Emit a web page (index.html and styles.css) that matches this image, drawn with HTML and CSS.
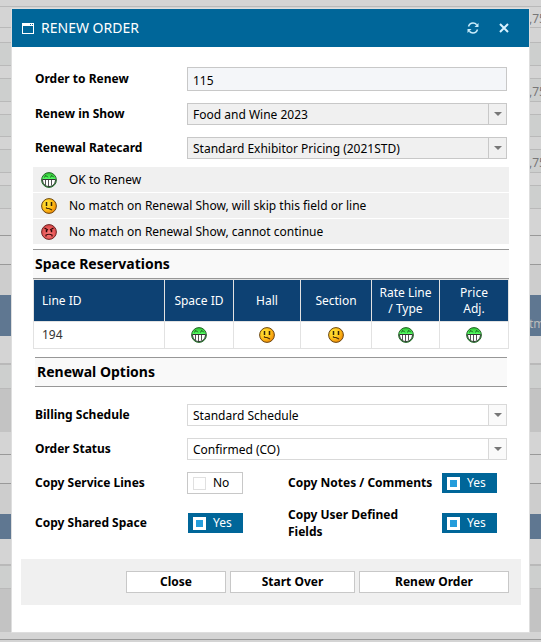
FILE: index.html
```html
<!DOCTYPE html>
<html lang="en">
<head>
<meta charset="utf-8">
<title>Renew Order</title>
<link rel="stylesheet" href="styles.css">
</head>
<body>
<svg class="sprite" aria-hidden="true">
  <defs>
    <linearGradient id="gGreen" x1="0" y1="0" x2="0" y2="1"><stop offset="0" stop-color="#2fc02f"/><stop offset=".4" stop-color="#52fb60"/><stop offset="1" stop-color="#45e058"/></linearGradient>
    <radialGradient id="gYellow" cx=".35" cy=".35" r=".7"><stop offset="0" stop-color="#ffea3c"/><stop offset=".55" stop-color="#ffc21a"/><stop offset="1" stop-color="#f08a08"/></radialGradient>
    <radialGradient id="gRed" cx=".5" cy=".6" r=".6"><stop offset="0" stop-color="#ff7a7a"/><stop offset="1" stop-color="#d84545"/></radialGradient>
    <symbol id="ok" viewBox="0 0 16 16">
      <circle cx="8" cy="8" r="7.4" fill="url(#gGreen)" stroke="#26632a"/>
      <path d="M3.2 5.300 5 3.500 6.800 5.300M9.200 5.300 11 3.500l1.800 1.800" fill="none" stroke="#124c15" stroke-width="1"/>
      <path d="M1.500 7.500h13c0 4-2.700 7-6.500 7s-6.500-3-6.500-7z" fill="#fff" stroke="#333"/>
      <path d="M4.500 8v5M7.500 8v6M10.500 8v5.500" stroke="#555" stroke-width="1"/>
    </symbol>
    <symbol id="skip" viewBox="0 0 16 16">
      <circle cx="8" cy="8" r="7.4" fill="url(#gYellow)" stroke="#6b4712"/>
      <path d="M5.500 4v4M10.500 4v4" stroke="#33220a" stroke-width="1.500"/>
      <path d="M5 9.500l1 1h2l3 1.500" fill="none" stroke="#4a300c" stroke-width="1.200"/>
    </symbol>
    <symbol id="stop" viewBox="0 0 16 16">
      <circle cx="8" cy="8" r="7.4" fill="url(#gRed)" stroke="#6e2525"/>
      <path d="M3.500 4 7 6M12.500 4 9 6" stroke="#2c0707" stroke-width="1.200"/>
      <path d="M5.500 6v2.200M10.500 6v2.200" stroke="#2c0707" stroke-width="1.500"/>
      <path d="M5 12.500v-1.500q3-1.500 6 0v1.500" fill="none" stroke="#3a0b0b" stroke-width="1.200"/>
    </symbol>
  </defs>
</svg>

<div class="backdrop" aria-hidden="true">
  <div class="strip h7"></div>
  <div class="strip h21"><span>,75</span></div>
  <div class="strip h15"></div>
  <div class="strip h23 alt"></div>
  <div class="strip h13"></div>
  <div class="strip h23 alt"><span>,75</span></div>
  <div class="strip h13"></div>
  <div class="strip h22 alt"></div>
  <div class="strip h13"></div>
  <div class="strip h23 alt"><span>,75</span></div>
  <div class="strip h13"></div>
  <div class="strip h23 alt"></div>
  <div class="strip h27 dark"></div>
  <div class="strip h29 dark"></div>
  <div class="strip h30 soft"></div>
  <div class="strip h41 blue"><span>tm</span></div>
  <div class="strip h29 thick"></div>
  <div class="strip h24 alt"></div>
  <div class="strip h43 deep"></div>
  <div class="strip h23 dark"></div>
  <div class="strip h29 dark"></div>
  <div class="strip h30 soft"></div>
  <div class="strip h25 blue"></div>
  <div class="strip h27 thick"></div>
  <div class="strip h23 alt"></div>
  <div class="strip h43 deep"></div>
  <div class="strip h8 dark"></div>
</div>

<div class="overlay">
<main class="dialog" role="dialog" aria-labelledby="title">
  <header class="titlebar">
    <svg class="window-icon" viewBox="0 0 12 11" aria-hidden="true"><path fill="#fff" fill-rule="evenodd" d="M0 0h12v11H0zM1 3v7h10V3zM8 1v1h1V1zM10 1v1h1V1z"/></svg>
    <h1 id="title">RENEW ORDER</h1>
    <button class="tool" type="button" aria-label="Refresh"><svg width="12" height="12" viewBox="0 0 12 12"><path fill="none" stroke="#c9ecfb" stroke-width="1.500" d="M1.500 4.500C2.200 2.300 3.800 1 6 1c1.600 0 2.700.5 3.700 1.700M10.500 7.500C9.800 9.700 8.200 11 6 11c-1.600 0-2.700-.5-3.700-1.700"/><path fill="#c9ecfb" d="M11.500 1v4h-4zM.5 11V7h4z"/></svg></button>
    <button class="tool" type="button" aria-label="Close dialog"><svg width="10" height="10" viewBox="0 0 10 10"><path stroke="#d8f2ff" stroke-width="2" d="M1 1l8 8M9 1 1 9"/></svg></button>
  </header>

  <form class="content">
    <div class="field"><label for="order">Order to Renew</label><input id="order" class="text" type="text" value="115" readonly></div>
    <div class="field"><label for="show">Renew in Show</label><div class="picker locked"><select id="show"><option>Food and Wine 2023</option></select></div></div>
    <div class="field"><label for="rate">Renewal Ratecard</label><div class="picker locked"><select id="rate"><option>Standard Exhibitor Pricing (2021STD)</option></select></div></div>

    <ul class="legend">
      <li><svg class="face"><use href="#ok"/></svg>OK to Renew</li>
      <li><svg class="face"><use href="#skip"/></svg>No match on Renewal Show, will skip this field or line</li>
      <li><svg class="face"><use href="#stop"/></svg>No match on Renewal Show, cannot continue</li>
    </ul>

    <h2 class="wide">Space Reservations</h2>
    <table>
      <colgroup><col class="c-line"><col class="c-space"><col class="c-hall"><col class="c-section"><col class="c-rate"><col class="c-price"></colgroup>
      <thead><tr><th>Line ID</th><th>Space ID</th><th>Hall</th><th>Section</th><th>Rate Line<br>/ Type</th><th>Price<br>Adj.</th></tr></thead>
      <tbody><tr>
        <td>194</td>
        <td><svg class="face"><use href="#ok"/></svg></td>
        <td><svg class="face"><use href="#skip"/></svg></td>
        <td><svg class="face"><use href="#skip"/></svg></td>
        <td><svg class="face"><use href="#ok"/></svg></td>
        <td><svg class="face"><use href="#ok"/></svg></td>
      </tr></tbody>
    </table>

    <h2>Renewal Options</h2>
    <div class="field"><label for="billing">Billing Schedule</label><div class="picker"><select id="billing"><option>Standard Schedule</option></select></div></div>
    <div class="field"><label for="status">Order Status</label><div class="picker"><select id="status"><option>Confirmed (CO)</option></select></div></div>

    <div class="switches">
      <label for="lines">Copy Service Lines</label>
      <label class="toggle"><input id="lines" type="checkbox"><span>No</span></label>
      <label class="second" for="notes">Copy Notes / Comments</label>
      <label class="toggle on"><input id="notes" type="checkbox" checked><span>Yes</span></label>
    </div>
    <div class="switches tall">
      <label for="shared">Copy Shared Space</label>
      <label class="toggle on"><input id="shared" type="checkbox" checked><span>Yes</span></label>
      <label class="second" for="user">Copy User Defined<br>Fields</label>
      <label class="toggle on"><input id="user" type="checkbox" checked><span>Yes</span></label>
    </div>
  </form>

  <footer class="actions">
    <button type="button">Close</button>
    <button type="button">Start Over</button>
    <button type="button">Renew Order</button>
  </footer>
</main>
</div>
</body>
</html>
```

FILE: styles.css
```css
* { box-sizing: border-box; }

body {
  margin: 0;
  height: 100vh;
  overflow: hidden;
  background: #d4d4d4;
  color: #000;
  font: 12px/16px "Noto Sans", "Open Sans", sans-serif;
}

button, input, select { font: inherit; color: inherit; margin: 0; }
.sprite { position: absolute; width: 0; height: 0; }

/* Dimmed page behind the dialog */
.strip {
  display: flex;
  justify-content: flex-end;
  align-items: center;
  border-bottom: 1px solid #b9b9b9;
  color: #777;
}
.strip span { width: 12px; padding-top: 4px; white-space: nowrap; }
.alt { background: #cdcfce; }
.dark { border-color: #999; }
.soft { background: #cdcdcd; border-color: #cdcdcd; }
.blue { background: #5f7791; border-color: #5f7791; color: #bbb; }
.blue.h41 { align-items: flex-end; padding-bottom: 3px; }
.deep { background: #c3c3c3; border-color: #c3c3c3; }
.thick { border-bottom-width: 2px; }
.h7 { height: 7px; } .h8 { height: 8px; } .h13 { height: 13px; }
.h15 { height: 15px; } .h21 { height: 21px; } .h22 { height: 22px; }
.h23 { height: 23px; } .h24 { height: 24px; } .h25 { height: 25px; }
.h27 { height: 27px; } .h29 { height: 29px; } .h30 { height: 30px; }
.h41 { height: 41px; } .h43 { height: 43px; }

.overlay { position: absolute; inset: 0; padding: 9px 12px; }
.dialog { background: #fff; padding-bottom: 27px; box-shadow: 0 0 0 1px #dedede; }

.titlebar {
  display: flex;
  align-items: center;
  height: 38px;
  padding: 0 14px 0 10px;
  background: #006699;
  color: #fff;
}
.window-icon { width: 12px; height: 11px; }
.titlebar h1 { flex: 1; margin: 0 0 0 7px; font-size: 14px; font-weight: 400; line-height: 20px; }
.tool { display: grid; place-items: center; width: 22px; height: 22px; padding: 0; border: 0; background: none; }
.tool + .tool { margin-left: 9px; }

.content { padding: 20px 20px 0 21px; }
label { font-weight: 700; }
.field { display: grid; grid-template-columns: 152px 1fr; align-items: center; margin: 0 2px 12px; }
.text { width: 100%; height: 24px; padding: 2px 5px 0; border: 1px solid #c8c8c8; background: #f4f6f9; }

.picker { position: relative; border: 1px solid #d9d9d9; background: #fff; }
.picker select { position: relative; display: block; width: 100%; height: 20px; padding: 2px 20px 0 5px; border: 0; appearance: none; background: none; }
.picker::before { content: ""; position: absolute; inset: 0 0 0 auto; width: 17px; border-left: 1px solid #d9d9d9; background: #fafafa; }
.picker::after {
  content: "";
  position: absolute;
  right: 4px;
  top: 8px;
  border: 4px solid transparent;
  border-top-color: #777;
  border-bottom: 0;
}
.locked, .locked::before { background: #f0f0f0; border-color: #c8c8c8; }

.legend { list-style: none; margin: -4px 0 5px; padding: 0; }
.legend li { display: flex; align-items: center; gap: 12px; height: 25px; margin-bottom: 1px; padding-left: 8px; background: #f0f0f0; }
.face { display: block; width: 16px; height: 16px; }

h2 {
  margin: 8px 2px 17px;
  padding: 4px 2px;
  border: 1px solid #979797;
  border-width: 1px 0;
  background: #f9f9f9;
  font-size: 14px;
  line-height: 20px;
}
h2.wide { margin: 0; }

table { width: 100%; table-layout: fixed; border-collapse: collapse; }
.c-line { width: 131px; } .c-space { width: 69px; } .c-hall { width: 67px; }
.c-section { width: 71px; } .c-rate { width: 68px; } .c-price { width: 69px; }
th, td { border: 1px solid #e2e2e2; padding: 5px 0; }
th { padding: 5px 0 4px; background: #0d4173; color: #fff; font-weight: 400; }
th:first-child, td:first-child { padding-left: 8px; text-align: left; }
td { color: #333; }
td .face { margin: 0 auto; }

.switches { display: grid; grid-template-columns: 152px 101px 153px 1fr; align-items: center; min-height: 22px; margin: 0 2px; }
.tall { margin-top: 12px; min-height: 34px; }
.tall .second { line-height: 17px; }
.toggle { display: flex; align-items: center; gap: 7px; width: 56px; height: 22px; padding: 0 5px; border: 1px solid #c8c8c8; font-weight: 400; }
.toggle input { appearance: none; width: 13px; height: 13px; border: 1px solid #e0e0e0; background: #fff; }
.toggle.on { background: #006699; color: #fff; border: 1px solid #fff; border-width: 1px 0 1px 1px; }
.toggle.on input { border: 3px solid #fff; background: #259ddb; }

.actions { display: flex; justify-content: flex-end; gap: 4px; margin: 19px 8px 0 9px; padding: 12px; background: #f0f0f0; }
.actions button { flex: 0 0 125px; height: 22px; padding: 0; border: 1px solid #c8c8c8; background: #fff; font-weight: 700; line-height: 16px; }
.actions button:first-child { flex-basis: 100px; }
.actions button:last-child { flex-basis: 150px; }
```
